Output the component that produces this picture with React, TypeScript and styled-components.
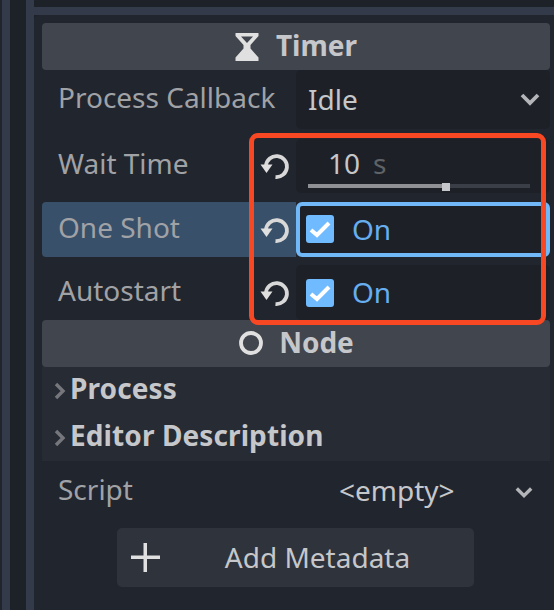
import { FC, ReactNode } from 'react';
import styled, { createGlobalStyle } from 'styled-components';

const GlobalStyle = createGlobalStyle`
  html, body {
    margin: 0;
    padding: 0;
    width: 554px;
    height: 610px;
    overflow: hidden;
    background: #20242c;
    font-family: "Noto Sans", "Open Sans", sans-serif;
  }
`;

const Page = styled.div`
  position: relative;
  width: 554px;
  height: 610px;
  display: flex;
  overflow: hidden;
  background: #1d2229;
`;

const Rail = styled.div<{ $width: number; $color: string }>`
  width: ${p => p.$width}px;
  flex: none;
  background: ${p => p.$color};
`;

const Main = styled.div`
  flex: 1;
  min-width: 0;
  display: flex;
  flex-direction: column;
`;

const TopStrip = styled.div`
  height: 7px;
  width: 460px;
  flex: none;
  background: #1d2229;
`;

const TopBorder = styled.div`
  height: 8px;
  flex: none;
  background: #333b4a;
`;

const Panel = styled.div`
  flex: 1;
  background: #21252d;
  border-radius: 5px 0 0 0;
  padding: 8px 4px 0 8px;
`;

const SectionHeader = styled.div`
  height: 47px;
  background: #41454d;
  border-radius: 4px;
  display: flex;
  align-items: center;
  justify-content: center;
  gap: 17px;
  font-size: 28px;
  font-weight: 700;
  color: #c6c7ca;
`;

const HeaderText = styled.span`
  margin-bottom: 4px;
`;

const Row = styled.div<{ $height: number; $marginTop?: number }>`
  height: ${p => p.$height}px;
  margin-top: ${p => p.$marginTop ?? 0}px;
  display: grid;
  grid-template-columns: 254px 254px;
`;

const Label = styled.div<{ $active?: boolean }>`
  display: flex;
  align-items: center;
  justify-content: space-between;
  padding: 0 4px 0 16px;
  font-size: 28px;
  color: #a0a2a6;
  background: ${p => (p.$active ? '#38506a' : 'transparent')};
  border-radius: 4px 0 0 4px;
`;

const LabelText = styled.span`
  margin-bottom: 6px;
`;

const Value = styled.div<{ $focused?: boolean }>`
  box-sizing: border-box;
  background: #1d2127;
  border-radius: ${p => (p.$focused ? 6 : 5)}px;
  display: flex;
  align-items: center;
  font-size: 28px;
  color: #c6c7ca;
  padding-left: ${p => (p.$focused ? 6 : 10)}px;
  border: ${p => (p.$focused ? '4px solid #70b8f8' : 'none')};
`;

const SelectValue = styled(Value)`
  justify-content: space-between;
  padding: 0 10px 0 12px;
`;

const SelectText = styled.span`
  margin-bottom: 2px;
`;

const SpinBox = styled(Value)`
  flex-direction: column;
  align-items: stretch;
  padding: 6px 20px 0 12px;
`;

const CheckBox = styled.span<{ $focused?: boolean }>`
  width: 28px;
  height: 28px;
  flex: none;
  margin-bottom: ${p => (p.$focused ? 2 : 0)}px;
  border-radius: 3px;
  background: #70baff;
  display: flex;
  align-items: center;
  justify-content: center;
`;

const OnText = styled.span`
  color: #66aef0;
  margin: 0 0 2px 18px;
`;

const SpinNumber = styled.div`
  height: 36px;
  line-height: 36px;
  padding-left: 20px;
  color: #c6c7ca;
`;

const Unit = styled.span`
  margin-left: 13px;
  color: #5f6266;
`;

const SliderTrack = styled.div`
  position: relative;
  height: 4px;
  margin-top: 3px;
  background: #3a3e46;
`;

const SliderFill = styled.div`
  height: 100%;
  background: #8e9094;
`;

const SliderGrab = styled.div`
  position: absolute;
  top: -1px;
  width: 8px;
  height: 8px;
  background: #c6c7ca;
`;

const FoldRow = styled.div`
  height: 47px;
  display: flex;
  align-items: center;
  gap: 4px;
  padding-left: 12px;
  background: #272b34;
  font-size: 28px;
  font-weight: 700;
  letter-spacing: 0.1px;
  color: #c6c7ca;
`;

const FoldText = styled.span`
  margin-bottom: 6px;
`;

const ScriptRow = styled.div`
  height: 60px;
  display: flex;
  align-items: center;
  padding: 0 17px 0 16px;
  font-size: 28px;
  color: #a0a2a6;
`;

const ScriptLabel = styled.span`
  margin-bottom: 5px;
`;

const ScriptValue = styled.span`
  margin-left: 206px;
  margin-bottom: 3px;
  color: #c6c7ca;
  flex: 1;
`;

const ScriptChevron = styled.span`
  display: flex;
  margin-top: 4px;
`;

const AddButton = styled.div`
  width: 357px;
  height: 59px;
  margin: 7px 0 0 75px;
  box-sizing: border-box;
  padding: 0 14px;
  border-radius: 5px;
  background: #2f333c;
  display: flex;
  align-items: center;
  font-size: 28px;
  color: #c6c7ca;
`;

const AddText = styled.span`
  flex: 1;
  text-align: center;
  padding-left: 15px;
  margin-bottom: 2px;
`;

const Highlight = styled.div`
  position: absolute;
  left: 249px;
  top: 133px;
  width: 297px;
  height: 192px;
  box-sizing: border-box;
  border: 5px solid #f74823;
  border-radius: 9px;
`;

const ResetIcon: FC = () => (
  <svg width="32" height="32" viewBox="0 0 32 32" fill="none">
    <path d="M6 15.500A10.500 10.500 0 1 1 15.500 27" stroke="#d8d8d8" strokeWidth="3.8" />
    <path d="M0.500 14.500H12.500L6.500 23z" fill="#e0e0e0" />
  </svg>
);

const Chevron: FC<{ size: number }> = ({ size }) => (
  <svg width={size} height={size} viewBox="0 0 20 20" fill="none">
    <path d="M2 5l8 8 8-8" stroke="#b4b5b8" strokeWidth="3.8" />
  </svg>
);

const Caret: FC = () => (
  <svg width="12" height="18" viewBox="0 0 12 18" fill="none">
    <path d="M2 2l7 7-7 7" stroke="#75777c" strokeWidth="3.4" />
  </svg>
);

const Hourglass: FC = () => (
  <svg width="24" height="28" viewBox="0 0 24 28">
    <path
      d="M0.500 0h23v3l-8 9v3.500l8 9V28h-23v-3.500l8-9V12l-8-9zM6 3.500 12 10l6-6.500z"
      fill="#e0e0e0"
      fillRule="evenodd"
    />
  </svg>
);

const NodeIconBox = styled.span`
  display: flex;
  margin: 0 -1px 2px 1px;
`;

const NodeIcon: FC = () => (
  <NodeIconBox>
    <svg width="24" height="24" viewBox="0 0 24 24" fill="none">
      <circle cx="12" cy="12" r="10" stroke="#e0e0e0" strokeWidth="3.800" />
    </svg>
  </NodeIconBox>
);

const Plus: FC = () => (
  <svg width="29" height="29" viewBox="0 0 29 29">
    <path d="M12.500 0h3.500v12.500H29V16H16v13h-3.500V16H0v-3.500h12.500z" fill="#e0e0e0" />
  </svg>
);

const Check: FC = () => (
  <svg width="22" height="18" viewBox="0 0 22 18" fill="none">
    <path d="M2 10l6 5L20 3" stroke="#ffffff" strokeWidth="4" />
  </svg>
);

const BoolValue: FC<{ focused?: boolean }> = ({ focused }) => (
  <Value $focused={focused}>
    <CheckBox $focused={focused}>
      <Check />
    </CheckBox>
    <OnText>On</OnText>
  </Value>
);

const PropLabel: FC<{ text: string; active?: boolean; children?: ReactNode }> = ({
  text,
  active,
  children,
}) => (
  <Label $active={active}>
    <LabelText>{text}</LabelText>
    {children}
  </Label>
);

const waitTime = { fill: 134, track: 222 };

export default function App() {
  const waitPercent = (waitTime.fill / waitTime.track) * 100;

  return (
    <Page>
      <GlobalStyle />
      <Rail $width={2} $color="#20242c" />
      <Rail $width={8} $color="#333b4a" />
      <Rail $width={16} $color="#1d2229" />
      <Rail $width={8} $color="#333b4a" />
      <Main>
        <TopStrip />
        <TopBorder />
        <Panel>
          <SectionHeader>
            <Hourglass />
            <HeaderText>Timer</HeaderText>
          </SectionHeader>
          <Row $height={59}>
            <PropLabel text="Process Callback" />
            <SelectValue>
              <SelectText>Idle</SelectText>
              <Chevron size={20} />
            </SelectValue>
          </Row>
          <Row $height={54} $marginTop={10}>
            <PropLabel text="Wait Time">
              <ResetIcon />
            </PropLabel>
            <SpinBox>
              <SpinNumber>
                10<Unit>s</Unit>
              </SpinNumber>
              <SliderTrack>
                <SliderFill style={{ width: `${waitPercent}%` }} />
                <SliderGrab style={{ left: `${waitPercent}%` }} />
              </SliderTrack>
            </SpinBox>
          </Row>
          <Row $height={55} $marginTop={9}>
            <PropLabel text="One Shot" active>
              <ResetIcon />
            </PropLabel>
            <BoolValue focused />
          </Row>
          <Row $height={55} $marginTop={8}>
            <PropLabel text="Autostart">
              <ResetIcon />
            </PropLabel>
            <BoolValue />
          </Row>
          <SectionHeader>
            <NodeIcon />
            <HeaderText>Node</HeaderText>
          </SectionHeader>
          <FoldRow>
            <Caret />
            <FoldText>Process</FoldText>
          </FoldRow>
          <FoldRow>
            <Caret />
            <FoldText>Editor Description</FoldText>
          </FoldRow>
          <ScriptRow>
            <ScriptLabel>Script</ScriptLabel>
            <ScriptValue>&lt;empty&gt;</ScriptValue>
            <ScriptChevron>
              <Chevron size={18} />
            </ScriptChevron>
          </ScriptRow>
          <AddButton>
            <Plus />
            <AddText>Add Metadata</AddText>
          </AddButton>
        </Panel>
      </Main>
      <Highlight />
    </Page>
  );
}
